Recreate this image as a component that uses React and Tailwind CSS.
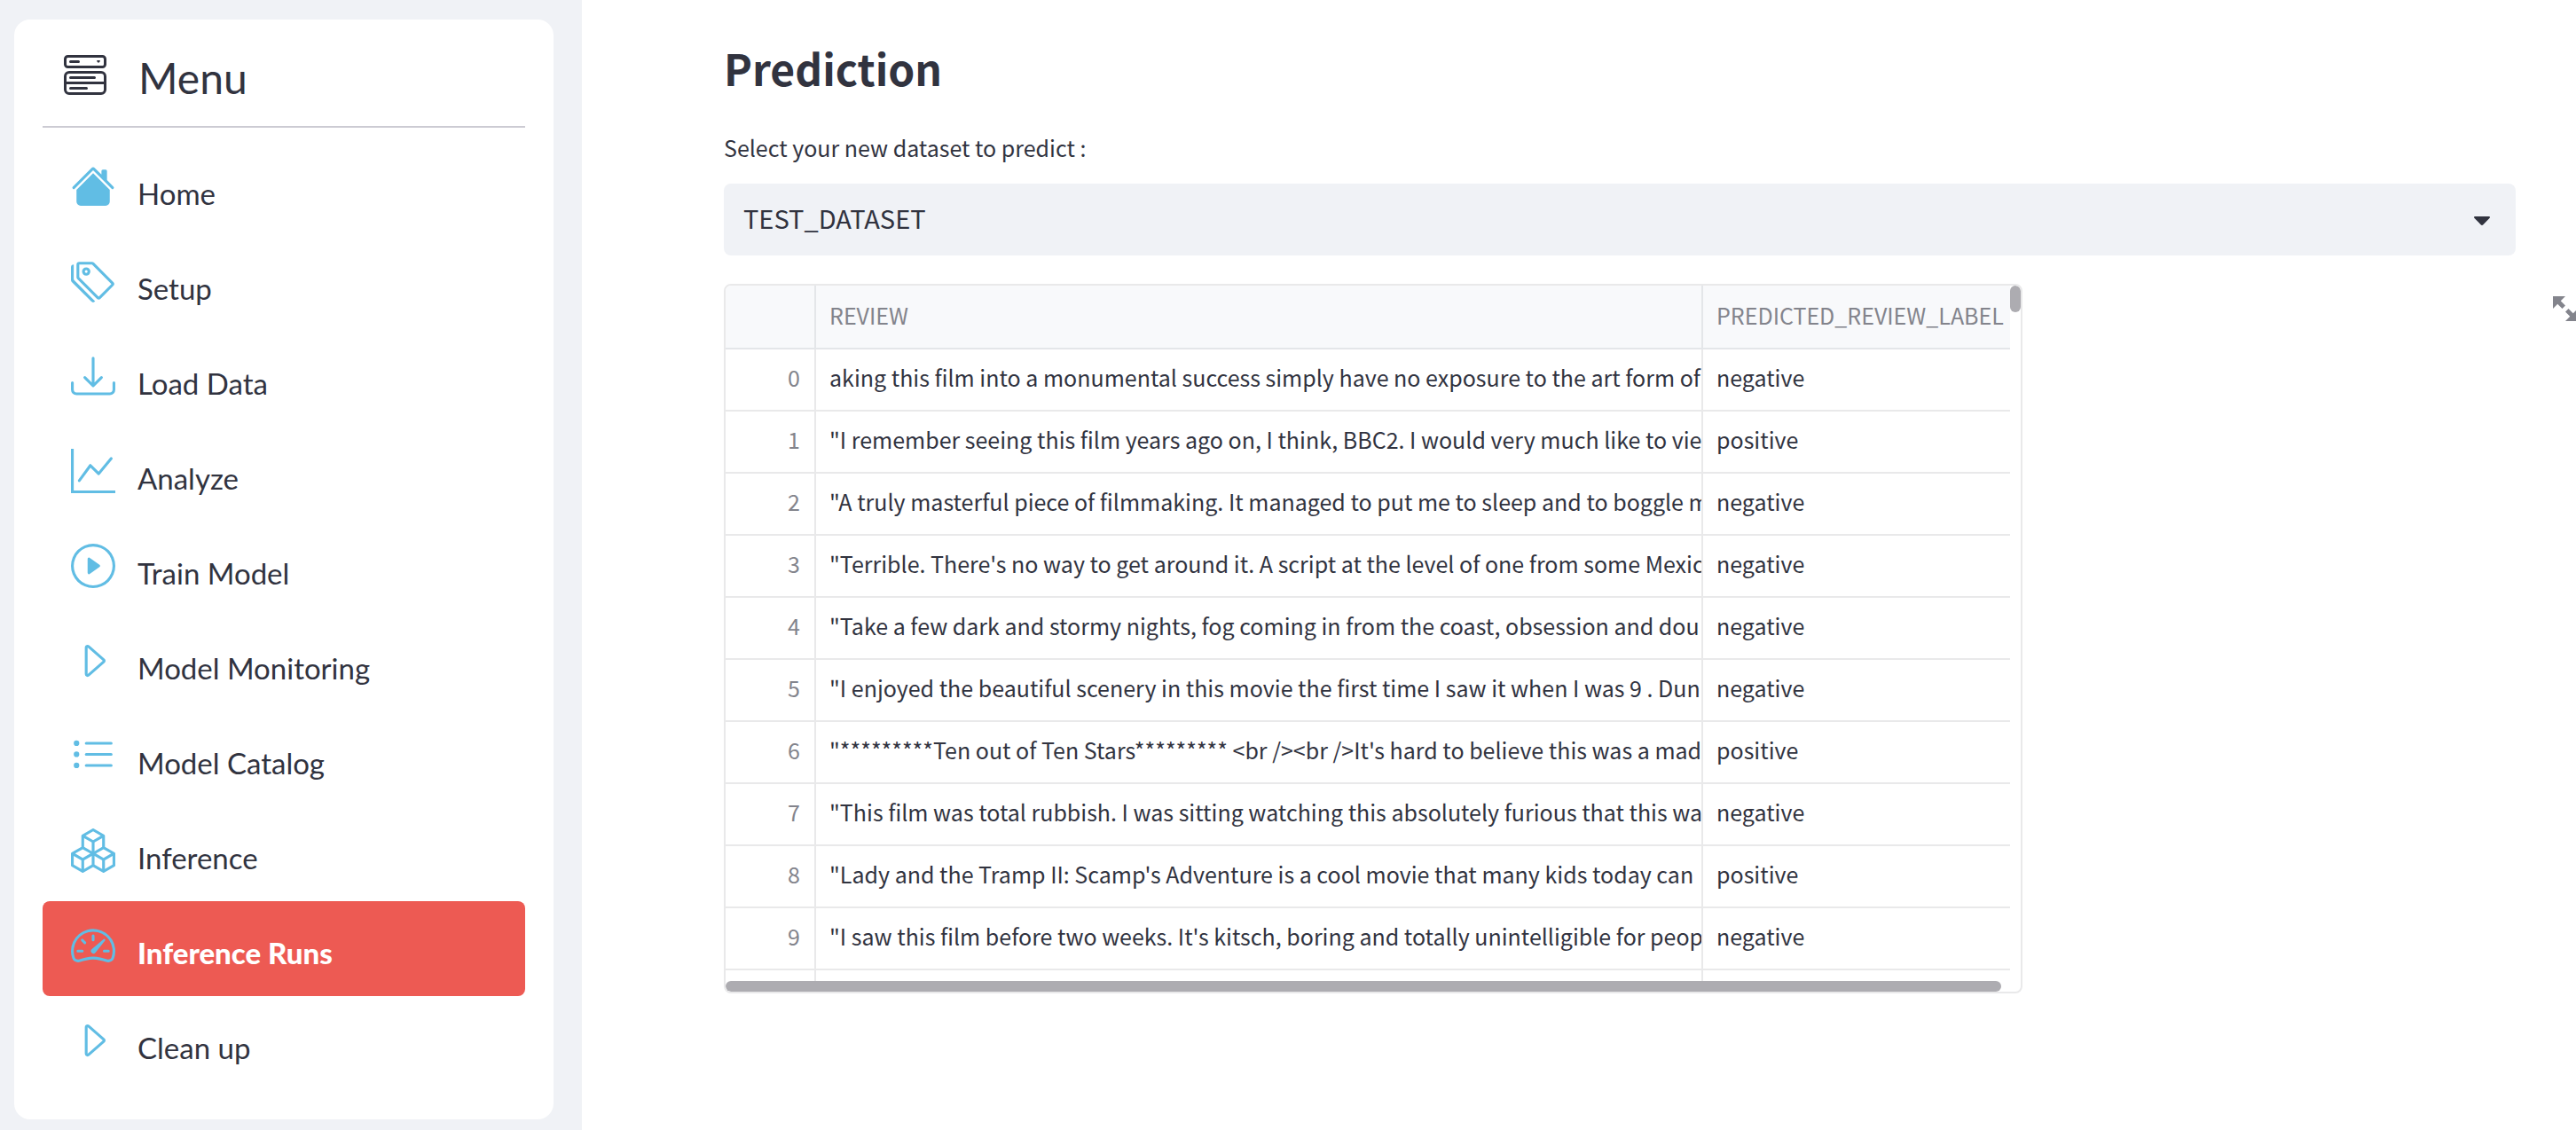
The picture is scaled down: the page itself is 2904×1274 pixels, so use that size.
import {
  BsMenuButtonWide,
  BsHouseFill,
  BsTags,
  BsDownload,
  BsGraphUp,
  BsPlayCircle,
  BsCaretRight,
  BsListUl,
  BsBoxes,
  BsSpeedometer2,
} from "react-icons/bs";

const menuItems = [
  { label: "Home", Icon: BsHouseFill },
  { label: "Setup", Icon: BsTags },
  { label: "Load Data", Icon: BsDownload },
  { label: "Analyze", Icon: BsGraphUp },
  { label: "Train Model", Icon: BsPlayCircle },
  { label: "Model Monitoring", Icon: BsCaretRight },
  { label: "Model Catalog", Icon: BsListUl },
  { label: "Inference", Icon: BsBoxes },
  { label: "Inference Runs", Icon: BsSpeedometer2, active: true },
  { label: "Clean up", Icon: BsCaretRight },
];

const rows = [
  ["aking this film into a monumental success simply have no exposure to the art form of", "negative"],
  ["\"I remember seeing this film years ago on, I think, BBC2. I would very much like to vie", "positive"],
  ["\"A truly masterful piece of filmmaking. It managed to put me to sleep and to boggle m", "negative"],
  ["\"Terrible. There's no way to get around it. A script at the level of one from some Mexic", "negative"],
  ["\"Take a few dark and stormy nights, fog coming in from the coast, obsession and dou", "negative"],
  ["\"I enjoyed the beautiful scenery in this movie the first time I saw it when I was 9 . Dun", "negative"],
  ["\"*********Ten out of Ten Stars********* <br /><br />It's hard to believe this was a mad", "positive"],
  ["\"This film was total rubbish. I was sitting watching this absolutely furious that this wa", "negative"],
  ["\"Lady and the Tramp II: Scamp's Adventure is a cool movie that many kids today can", "positive"],
  ["\"I saw this film before two weeks. It's kitsch, boring and totally unintelligible for peop", "negative"],
];

function Sidebar() {
  return (
    <aside className="w-[656px] shrink-0 bg-[#f0f2f6] pt-[22px] pr-8 pb-3 pl-4 font-['Lato',sans-serif] text-[#31333f]">
      <nav className="rounded-[18px] bg-white px-8 pb-8">
        <div className="flex h-[122px] items-center gap-9 border-b-2 border-[#cccbd3] pt-2 pl-6">
          <BsMenuButtonWide className="size-12" />
          <h2 className="pt-1 text-[48px] leading-[58px]">Menu</h2>
        </div>
        <ul className="pt-4">
          {menuItems.map(({ label, Icon, active }) => (
            <li key={label}>
              <a
                href="#"
                aria-current={active ? "page" : undefined}
                className={
                  active
                    ? "flex h-[107px] items-center gap-[25px] rounded-lg bg-[#ed5a53] pl-8 font-black text-white"
                    : "flex h-[107px] items-center gap-[25px] rounded-lg pl-8"
                }
              >
                <Icon className="mb-[7px] size-[50px] shrink-0 text-[#61bde4]" />
                <span className="pt-2 text-[33px] leading-10">{label}</span>
              </a>
            </li>
          ))}
        </ul>
      </nav>
    </aside>
  );
}

function DatasetSelect() {
  return (
    <div>
      <label htmlFor="dataset" className="block text-[25px] leading-10">
        Select your new dataset to predict :
      </label>
      <div className="relative mt-[21px]">
        <select
          id="dataset"
          className="h-[81px] w-full appearance-none rounded-lg bg-[#f0f2f6] pr-20 pb-1 pl-[22px] text-[29px]"
        >
          <option>TEST_DATASET</option>
        </select>
        <svg
          viewBox="0 0 18 10"
          className="pointer-events-none absolute top-[37px] right-[29px] h-[10px] w-[18px] fill-[#31333f]"
        >
          <path d="M1 0h16a1 1 0 0 1 .7 1.700L10.400 9.200a2 2 0 0 1-2.800 0L.3 1.700A1 1 0 0 1 1 0z" />
        </svg>
      </div>
    </div>
  );
}

function PredictionTable() {
  return (
    <div className="relative h-[800px] w-full max-w-[1464px] overflow-hidden rounded-lg border-2 border-[#e9e9ea]">
      <div className="h-[784px] overflow-hidden pr-3">
        <table className="w-full table-fixed border-separate border-spacing-0 text-left text-[25px] leading-[38px]">
          <colgroup>
            <col className="w-[102px]" />
            <col />
            <col className="w-[346px]" />
          </colgroup>
          <thead>
            <tr className="h-[72px] text-[#83848c]">
              <th className="border-r-2 border-b-2 border-[#e4e6e9] bg-[#f8f9fb]" aria-label="Index" />
              <th className="border-r-2 border-b-2 border-[#e4e6e9] bg-[#f8f9fb] pb-1 pl-[15px] font-normal">
                REVIEW
              </th>
              <th className="overflow-hidden border-b-2 border-[#e4e6e9] bg-[#f8f9fb] pb-1 pl-[15px] font-normal whitespace-nowrap">
                PREDICTED_REVIEW_LABEL
              </th>
            </tr>
          </thead>
          <tbody>
            {rows.map(([review, label], index) => (
              <tr key={index} className="h-[70px]">
                <td className="border-r-2 border-b-2 border-[#e9e9ea] pr-4 pb-1.5 text-right text-[#83848c]">
                  {index}
                </td>
                <td className="overflow-hidden border-r-2 border-b-2 border-[#e9e9ea] pb-1.5 pl-[15px] whitespace-nowrap">
                  {review}
                </td>
                <td className="border-b-2 border-[#e9e9ea] pb-1.5 pl-[15px]">{label}</td>
              </tr>
            ))}
            <tr className="h-[70px]">
              <td className="border-r-2 border-[#e9e9ea]" />
              <td className="border-r-2 border-[#e9e9ea]" />
              <td />
            </tr>
          </tbody>
        </table>
      </div>
      <div className="absolute top-0 right-0 h-[30px] w-3 rounded-full bg-[#adacb1]" />
      <div className="absolute right-[22px] bottom-0 left-0 h-3 rounded-full bg-[#adacb1]" />
    </div>
  );
}

export default function App() {
  return (
    <div className="flex min-h-screen overflow-hidden bg-white">
      <Sidebar />
      <main className="min-w-0 flex-1 pt-[42px] pl-40 font-['Noto_Sans_CJK_JP',sans-serif] text-[#31333f]">
        <div className="pr-[68px]">
          <h1 className="mb-9 text-[48px] leading-[68px] font-bold">Prediction</h1>
          <DatasetSelect />
        </div>
        <div className="mt-8 flex items-start justify-between overflow-hidden">
          <PredictionTable />
          <button type="button" aria-label="View fullscreen" className="-mr-[2px] mt-[14px] text-[#83848c]">
            <svg viewBox="0 0 8 8" className="size-7 fill-current">
              <path d="M0 0v4l1.500-1.500 1.500 1.500 1-1-1.500-1.500 1.500-1.500h-4zm5 4l-1 1 1.500 1.500-1.500 1.500h4v-4l-1.500 1.500-1.500-1.500z" />
            </svg>
          </button>
        </div>
      </main>
    </div>
  );
}
